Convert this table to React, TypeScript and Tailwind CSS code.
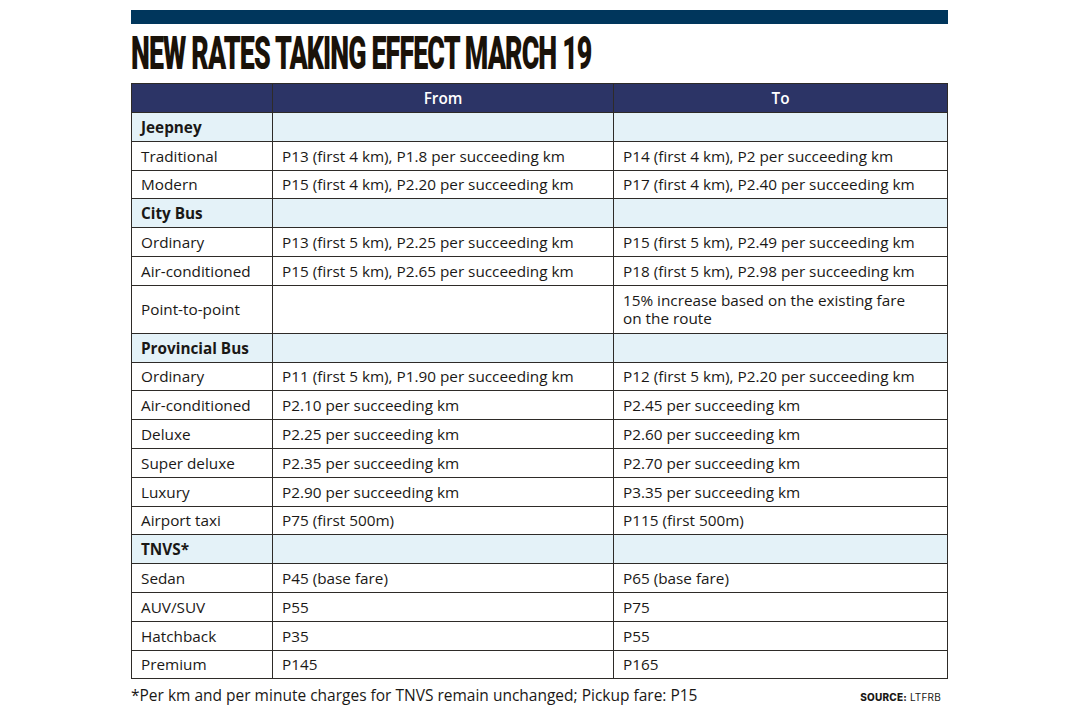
import React from 'react';

type Row = { label: string; from?: string; to?: string; group?: boolean; tall?: boolean };

const rows: Row[] = [
  { label: 'Jeepney', group: true },
  { label: 'Traditional', from: 'P13 (first 4 km), P1.8 per succeeding km', to: 'P14 (first 4 km), P2 per succeeding km' },
  { label: 'Modern', from: 'P15 (first 4 km), P2.20 per succeeding km', to: 'P17 (first 4 km), P2.40 per succeeding km' },
  { label: 'City Bus', group: true },
  { label: 'Ordinary', from: 'P13 (first 5 km), P2.25 per succeeding km', to: 'P15 (first 5 km), P2.49 per succeeding km' },
  { label: 'Air-conditioned', from: 'P15 (first 5 km), P2.65 per succeeding km', to: 'P18 (first 5 km), P2.98 per succeeding km' },
  { label: 'Point-to-point', from: '', to: '15% increase based on the existing fare on the route', tall: true },
  { label: 'Provincial Bus', group: true },
  { label: 'Ordinary', from: 'P11 (first 5 km), P1.90 per succeeding km', to: 'P12 (first 5 km), P2.20 per succeeding km' },
  { label: 'Air-conditioned', from: 'P2.10 per succeeding km', to: 'P2.45 per succeeding km' },
  { label: 'Deluxe', from: 'P2.25 per succeeding km', to: 'P2.60 per succeeding km' },
  { label: 'Super deluxe', from: 'P2.35 per succeeding km', to: 'P2.70 per succeeding km' },
  { label: 'Luxury', from: 'P2.90 per succeeding km', to: 'P3.35 per succeeding km' },
  { label: 'Airport taxi', from: 'P75 (first 500m)', to: 'P115 (first 500m)' },
  { label: 'TNVS*', group: true },
  { label: 'Sedan', from: 'P45 (base fare)', to: 'P65 (base fare)' },
  { label: 'AUV/SUV', from: 'P55', to: 'P75' },
  { label: 'Hatchback', from: 'P35', to: 'P55' },
  { label: 'Premium', from: 'P145', to: 'P165' },
];

const cell = 'border border-[#2e2b28] px-[9px] align-middle';

export default function App() {
  return (
    <div className="w-[1077px] h-[721px] bg-white font-['Open_Sans',sans-serif] text-[#1a1816]">
      <div className="ml-[131px] w-[817px] pt-[10px]">
        <div className="h-[14px] bg-[#00365c]" />
        <h1 className="mt-[3px] h-[52px] overflow-visible whitespace-nowrap">
          <span className="inline-block origin-left scale-x-[0.57] font-['Roboto',sans-serif] text-[47px] font-black leading-[52px] tracking-[-1.5px] text-[#1a1209]">
            NEW RATES TAKING EFFECT MARCH 19
          </span>
        </h1>
        <table className="mt-[4px] w-[816px] table-fixed border-collapse text-[15.3px] leading-[18px]">
          <colgroup>
            <col className="w-[141px]" />
            <col className="w-[341px]" />
            <col className="w-[334px]" />
          </colgroup>
          <thead>
            <tr className="h-[29px] bg-[#2c3466] text-white">
              <th className={cell} />
              <th className={`${cell} text-center font-semibold`}>From</th>
              <th className={`${cell} text-center font-semibold`}>To</th>
            </tr>
          </thead>
          <tbody>
            {rows.map((r, i) =>
              r.group ? (
                <tr key={i} className="h-[28.8px] bg-[#e4f2f8]">
                  <td className={`${cell} text-left font-bold`}>{r.label}</td>
                  <td className={cell} />
                  <td className={cell} />
                </tr>
              ) : (
                <tr key={i} className={r.tall ? 'h-[48px]' : 'h-[28.8px]'}>
                  <td className={`${cell} text-left`}>{r.label}</td>
                  <td className={`${cell} text-left`}>{r.from}</td>
                  <td className={`${cell} text-left ${r.tall ? 'pr-[30px]' : ''}`}>{r.to}</td>
                </tr>
              )
            )}
          </tbody>
        </table>
        <div className="mt-[6px] flex items-baseline justify-between pr-[7px]">
          <p className="text-[15.5px] leading-[20px]">
            *Per km and per minute charges for TNVS remain unchanged; Pickup fare: P15
          </p>
          <p className="font-['Inter',sans-serif] text-[10px] tracking-[0.2px]">
            <span className="font-extrabold">SOURCE:</span> LTFRB
          </p>
        </div>
      </div>
    </div>
  );
}
